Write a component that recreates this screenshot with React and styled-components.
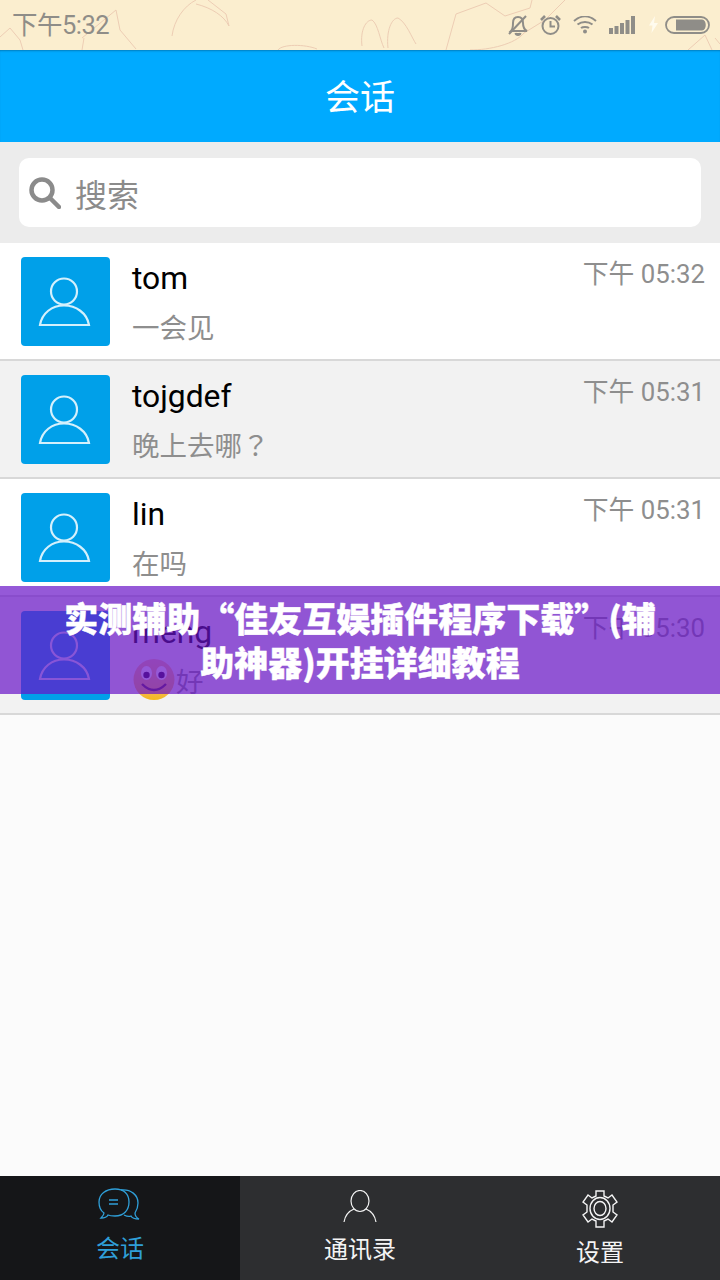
import React from "react";
import styled, { createGlobalStyle } from "styled-components";

const Global = createGlobalStyle`
  html, body { margin: 0; padding: 0; background: #fafafa; }
  * { box-sizing: border-box; }
  body { font-family: Roboto, "Noto Sans CJK SC", sans-serif; }
`;
const CJK = `Roboto, "Noto Sans CJK SC", sans-serif`;

const Page = styled.div`
  position: relative; width: 720px; height: 1280px; display: flex; flex-direction: column;
  overflow: hidden; background: #fbfbfb;
`;
const StatusBar = styled.div`
  position: relative; flex: 0 0 50px; display: flex; align-items: center; justify-content: space-between;
  padding: 0 10px 0 12px; background: #fbeecf;
`;
const Doodle = styled.svg`
  position: absolute; left: 0; top: 0; width: 720px; height: 50px;
`;
const StatusTime = styled.span`
  position: relative; margin-bottom: 5px; font: 400 25.5px ${CJK}; color: #8f8d88; letter-spacing: -0.5px;
`;
const StatusIcons = styled.div`
  position: relative; display: flex; align-items: center; gap: 12px; height: 34px; margin-top: -1px;
`;
const BoltWrap = styled.span`
  display: flex; margin: 0 -5px 0 2px;
`;
const Header = styled.header`
  flex: 0 0 92px; display: flex; align-items: center; justify-content: center; padding-bottom: 4px;
  background: #00aaff; box-shadow: inset 0 2px 2px -1px rgba(0, 70, 110, .45);
  color: #fff; font: 400 35px ${CJK};
`;
const SearchWrap = styled.div`
  flex: 0 0 101px; padding: 16px 19px; background: #ececec;
`;
const SearchBox = styled.div`
  display: flex; align-items: center; gap: 14px; height: 69px; padding-left: 10px;
  background: #fff; border-radius: 10px; color: #8b8b8b; font: 400 32px ${CJK};
`;
const List = styled.div`
  flex: 1; display: flex; flex-direction: column;
`;
const Row = styled.div`
  flex: 0 0 118px; display: flex; padding: 14px 15px 0 21px; gap: 22px;
  background: ${p => (p.$alt ? "#f2f2f2" : "#fff")}; border-bottom: 2px solid #d8d8d8;
`;
const Avatar = styled.div`
  flex: 0 0 89px; height: 89px; border-radius: 4px; background: #00a0e9;
  display: flex;
`;
const Body = styled.div`
  flex: 1; display: flex; flex-direction: column;
`;
const Name = styled.div`
  height: 42px; line-height: 42px; font-size: 31.8px; color: #000;
`;
const Msg = styled.div`
  display: flex; align-items: center; height: 44px; margin-top: 5px;
  font-size: 27.5px; color: #8e8e8e;
`;
const Punct = styled.span`
  font-family: "Noto Sans CJK TC", sans-serif;
`;
const Time = styled.div`
  height: 34px; line-height: 34px; font-size: 25.8px; color: #8e8e8e; white-space: nowrap;
`;
const TabBar = styled.nav`
  flex: 0 0 104px; display: grid; grid-template-columns: repeat(3, 240px); background: #2d2e30;
`;
const Tab = styled.div`
  display: flex; flex-direction: column; align-items: center;
  padding-top: ${p => p.$top}px; background: ${p => (p.$active ? "#151618" : "transparent")};
  color: ${p => (p.$active ? "#2f9fd8" : "#f4f4f4")}; font: 400 24px ${CJK};
`;
const TabLabel = styled.span`
  margin-top: ${p => p.$gap}px; line-height: 30px;
`;
const Banner = styled.div`
  position: absolute; left: 0; top: 586px; width: 720px; height: 108px;
  display: flex; align-items: center; justify-content: center; text-align: center;
  background: rgba(104, 18, 200, .7);
  color: #fff; font: 900 34px/44px "Noto Sans CJK SC", sans-serif;
  -webkit-text-stroke: .4px #fff;
`;

const Person = () => (
  <svg width="89" height="89" viewBox="0 0 89 89" fill="none" stroke="#d4f0fc" strokeWidth="2.2">
    <circle cx="43" cy="34.5" r="13" />
    <path d="M19 68 C21 56 31 48.5 43 48.5 C55 48.5 66 56 68 68 Z" />
  </svg>
);
const Smile = () => (
  <svg width="44" height="44" viewBox="0 0 44 44">
    <defs>
      <linearGradient id="sm" x1="0" y1="0" x2="0" y2="1">
        <stop offset="0" stopColor="#f5b9a0" />
        <stop offset=".7" stopColor="#f6b860" />
        <stop offset="1" stopColor="#f3b91c" />
      </linearGradient>
    </defs>
    <circle cx="22" cy="21.5" r="20.5" fill="url(#sm)" />
    <ellipse cx="14.5" cy="15" rx="5.5" ry="7" fill="#fff" />
    <ellipse cx="29.5" cy="15" rx="5.5" ry="7" fill="#fff" />
    <circle cx="14.5" cy="17" r="3.2" fill="#30103a" />
    <circle cx="29.5" cy="17" r="3.2" fill="#30103a" />
    <path d="M10 26 Q22 38 34 26" fill="none" stroke="#5a2848" strokeWidth="2.4" />
  </svg>
);

const rows = [
  { name: "tom", msg: "一会见", time: "下午 05:32" },
  { name: "tojgdef", msg: "晚上去哪", punct: "？", time: "下午 05:31", alt: true },
  { name: "lin", msg: "在吗", time: "下午 05:31" },
  { name: "meng", msg: "好", emoji: true, time: "下午 05:30", alt: true },
];

export default function App() {
  return (
    <Page>
      <Global />
      <StatusBar>
        <Doodle viewBox="0 0 720 50" fill="none" stroke="#edcdb4" strokeWidth="1">
          <path d="M0 37 L10 28 L20 40 L23 50" />
          <path d="M82 38 L116 10 L120 30 L136 49 M84 38 L82 50" />
          <path d="M172 36 C174 20 184 6 196 0 M196 4 C212 8 224 16 229 26 L226 14 L208 0" />
          <path d="M278 50 C282 44 305 44 317 49" />
          <path d="M362 46 C360 30 366 20 372 20 C378 24 380 40 384 48 M388 48 C386 30 392 18 398 18 C406 22 412 38 416 44" />
          <path d="M446 50 L456 14 L486 3 L505 16 L530 8 L532 0 M470 50 C490 50 515 44 524 33 L545 20 L565 0" />
          <path d="M688 50 L705 35 L712 50 M715 38 L720 44" />
        </Doodle>
        <StatusTime>下午5:32</StatusTime>
        <StatusIcons>
          <svg width="20" height="22" viewBox="0 0 20 22" fill="none" stroke="#8f8d88" strokeWidth="2">
            <path d="M3 17 C5 15 5 12 5 9 C5 5 7 3 10 3 C13 3 15 5 15 9 C15 12 15 15 19 17 Z" />
            <path d="M7.5 19 C8 21.5 12 21.5 12.5 19" fill="#8f8d88" />
            <path d="M18 2 L1 20" />
          </svg>
          <svg width="21" height="20" viewBox="0 0 21 20" fill="none" stroke="#8f8d88" strokeWidth="2">
            <circle cx="10.5" cy="11" r="8" />
            <path d="M10.5 6 V11.5 H15" />
            <path d="M1 5 L5 1 M16 1 L20 5" strokeWidth="2.6" />
          </svg>
          <svg width="24" height="18" viewBox="0 0 24 18" fill="none" stroke="#8f8d88" strokeWidth="2">
            <path d="M1 5 C8 -1 16 -1 23 5" />
            <path d="M4.5 8.5 C9 5 15 5 19.5 8.5" />
            <path d="M8 12 C10 10.5 14 10.5 16 12" />
            <circle cx="12" cy="15.5" r="2" fill="#8f8d88" stroke="none" />
          </svg>
          <svg width="26" height="18" viewBox="0 0 26 18" fill="#8f8d88">
            <rect x="0" y="12" width="4" height="6" />
            <rect x="5.5" y="10" width="4" height="8" />
            <rect x="11" y="7" width="4" height="11" />
            <rect x="16.5" y="4" width="4" height="14" />
            <rect x="22" y="0" width="4" height="18" />
          </svg>
          <BoltWrap>
            <svg width="9" height="17" viewBox="0 0 9 17" fill="#fffbee">
              <path d="M6 0 L0 9.5 H3.5 L2.5 17 L9 7 H5 Z" />
            </svg>
          </BoltWrap>
          <svg width="45" height="18" viewBox="0 0 45 18">
            <rect x="1" y="1" width="43" height="16" rx="8" fill="none" stroke="#8f8d88" strokeWidth="1.8" />
            <path d="M11 3.5 H37 C42 3.5 42 14.5 37 14.5 H11 Z" fill="#8f8d88" />
          </svg>
        </StatusIcons>
      </StatusBar>
      <Header>会话</Header>
      <SearchWrap>
        <SearchBox>
          <svg width="32" height="32" viewBox="0 0 32 32" fill="none" stroke="#8b8b8b">
            <circle cx="13" cy="13" r="10.5" strokeWidth="4.5" />
            <path d="M21 21 L30 30" strokeWidth="4.5" strokeLinecap="round" />
          </svg>
          搜索
        </SearchBox>
      </SearchWrap>
      <List>
        {rows.map(r => (
          <Row key={r.name} $alt={r.alt}>
            <Avatar><Person /></Avatar>
            <Body>
              <Name>{r.name}</Name>
              <Msg>{r.emoji && <Smile />}{r.msg}{r.punct && <Punct>{r.punct}</Punct>}</Msg>
            </Body>
            <Time>{r.time}</Time>
          </Row>
        ))}
      </List>
      <TabBar>
        <Tab $active $top={12}>
          <svg width="44" height="36" viewBox="0 0 44 36" fill="none" stroke="#2f9fd8" strokeWidth="1.3">
            <path d="M17 1 C8 1 1 6 1 14 C1 19 3 23 6 25 C6 27 4 29 3 30 C6 30 9 29 10 27 C12 28 15 28 17 28 C26 28 31 22 31 14 C31 6 26 1 17 1 Z" />
            <path d="M23 2 C33 1 40 7 40 15 C40 19 39 22 37 25 C37 28 39 30 41 31 C37 31 34 30 33 28 C31 29 28 28 26 27" />
            <path d="M11 12 H20 M11 16 H20" strokeWidth="1.6" />
          </svg>
          <TabLabel $gap={10}>会话</TabLabel>
        </Tab>
        <Tab $top={14}>
          <svg width="34" height="33" viewBox="0 0 34 33" fill="none" stroke="#f4f4f4" strokeWidth="1.2">
            <ellipse cx="17" cy="11" rx="9" ry="10.5" />
            <path d="M11 19 C6 21 2 26 1 32 M23 19 C28 21 32 26 33 32" />
          </svg>
          <TabLabel $gap={12}>通讯录</TabLabel>
        </Tab>
        <Tab $top={14}>
          <svg width="38" height="38" viewBox="0 0 38 38" fill="none" stroke="#f4f4f4" strokeWidth="1.4">
            <path d="M15 1 H23 V6 L27 8 L31 5 L36 12 L32 15 V22 L36 25 L31 32 L27 29 L23 31 V37 H15 V31 L11 29 L7 32 L2 25 L6 22 V15 L2 12 L7 5 L11 8 L15 6 Z" />
            <ellipse cx="19" cy="18.5" rx="10" ry="11" />
            <ellipse cx="19" cy="18.5" rx="6" ry="7" />
          </svg>
          <TabLabel $gap={10}>设置</TabLabel>
        </Tab>
      </TabBar>
      <Banner>
        <span>实测辅助“佳友互娱插件程序下载”(辅<br />助神器)开挂详细教程</span>
      </Banner>
    </Page>
  );
}
